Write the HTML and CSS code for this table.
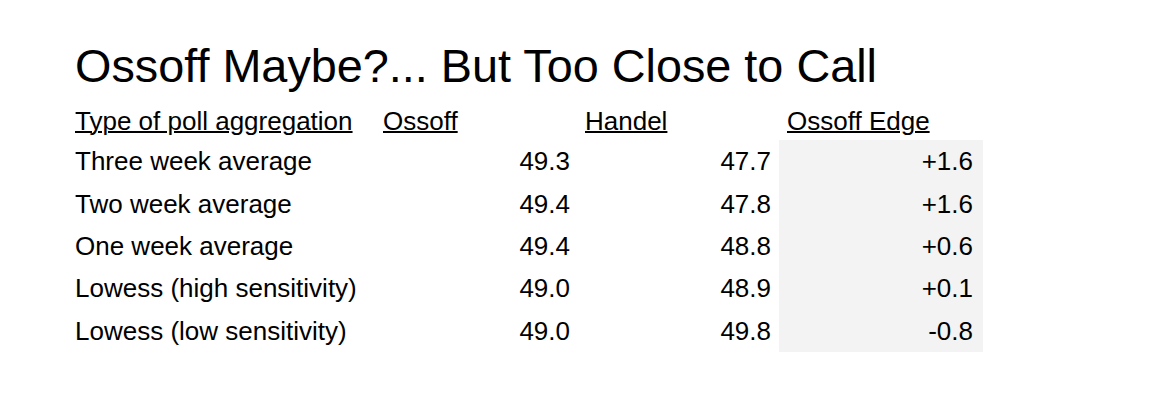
FILE: index.html
```html
<!DOCTYPE html>
<html>
<head>
<meta charset="utf-8">
<link rel="stylesheet" href="styles.css">
</head>
<body>
<div class="page">
  <h1 class="title">Ossoff Maybe?... But Too Close to Call</h1>
  <table class="polls">
    <thead>
      <tr>
        <th class="c1">Type of poll aggregation</th>
        <th class="c2">Ossoff</th>
        <th class="c3">Handel</th>
        <th class="c4">Ossoff Edge</th>
      </tr>
    </thead>
    <tbody>
      <tr><td>Three week average</td><td class="num">49.3</td><td class="num">47.7</td><td class="num edge">+1.6</td></tr>
      <tr><td>Two week average</td><td class="num">49.4</td><td class="num">47.8</td><td class="num edge">+1.6</td></tr>
      <tr><td>One week average</td><td class="num">49.4</td><td class="num">48.8</td><td class="num edge">+0.6</td></tr>
      <tr><td>Lowess (high sensitivity)</td><td class="num">49.0</td><td class="num">48.9</td><td class="num edge">+0.1</td></tr>
      <tr><td>Lowess (low sensitivity)</td><td class="num">49.0</td><td class="num">49.8</td><td class="num edge">-0.8</td></tr>
    </tbody>
  </table>
</div>
</body>
</html>
```
FILE: styles.css
```css
html, body {
  margin: 0;
  padding: 0;
  background: #ffffff;
}
.page {
  padding: 0 0 0 67px;
  font-family: "Liberation Sans", Arial, sans-serif;
  color: #000;
}
.title {
  margin: 0;
  padding: 41px 0 0 8px;
  font-size: 46.8px;
  font-weight: normal;
  line-height: 50px;
}
.polls {
  border-collapse: collapse;
  table-layout: fixed;
  width: 916px;
  font-size: 26px;
}
.polls thead tr {
  height: 49px;
}
.polls tbody tr {
  height: 42.4px;
}
.polls th {
  font-weight: normal;
  text-align: left;
  text-decoration: underline;
  text-decoration-thickness: 2px;
  padding: 0 8px 4px 8px;
  vertical-align: bottom;
  line-height: 30px;
}
.polls th.c3 {
  padding-left: 7px;
}
.c1 { width: 292px; }
.c2 { width: 187px; }
.c3 { width: 186px; }
.c4 { width: 188px; }
.polls td {
  padding: 0 8px;
  line-height: 30px;
  vertical-align: middle;
}
.polls td.num {
  text-align: right;
}
.polls td.edge {
  background: #f3f3f3;
  padding-right: 10px;
}
```
